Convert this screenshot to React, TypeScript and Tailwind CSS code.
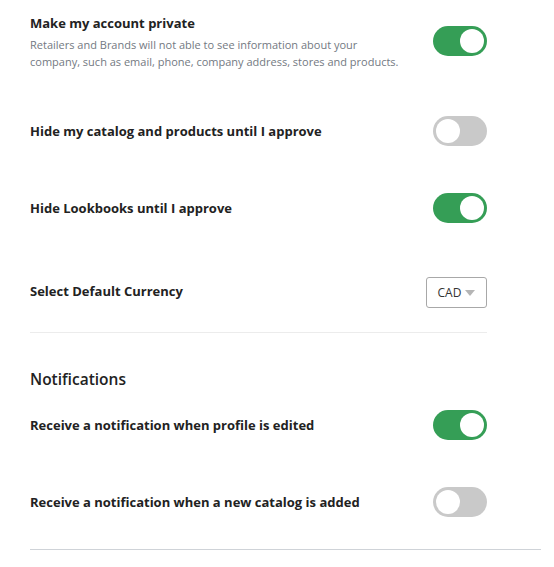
import { useState } from 'react';

function Toggle({ on, onChange }: { on: boolean; onChange: () => void }) {
  return (
    <button
      type="button"
      role="switch"
      aria-checked={on}
      onClick={onChange}
      className={
        'relative flex h-[30px] w-[54px] shrink-0 items-center rounded-full px-[3px] transition-colors ' +
        (on ? 'justify-end bg-[#359e56]' : 'justify-start bg-[#c9c9c9]')
      }
    >
      <span className="block h-[24px] w-[24px] rounded-full bg-white" />
    </button>
  );
}

const label = "text-[13px] font-bold leading-[20px] text-[#222]";

export default function App() {
  const [settings, setSettings] = useState({
    private: true,
    hideCatalog: false,
    hideLookbooks: true,
    profileEdited: true,
    newCatalog: false,
  });
  const flip = (k: keyof typeof settings) => setSettings((s) => ({ ...s, [k]: !s[k] }));

  return (
    <div className="min-h-[567px] bg-white pl-[30px] pt-[12px]" style={{ fontFamily: '"Open Sans", sans-serif' }}>
      <div className="w-[457px]">
        <div className="flex items-center justify-between">
          <div>
            <div className={label + ' pt-[1px]'}>Make my account private</div>
            <p className="mt-[3px] text-[11px] leading-[17px] text-[#737982]">
              Retailers and Brands will not able to see information about your
              <br />
              company, such as email, phone, company address, stores and products.
            </p>
          </div>
          <Toggle on={settings.private} onChange={() => flip('private')} />
        </div>

        <div className="mt-[46px] flex items-center justify-between">
          <div className={label}>Hide my catalog and products until I approve</div>
          <Toggle on={settings.hideCatalog} onChange={() => flip('hideCatalog')} />
        </div>

        <div className="mt-[47px] flex items-center justify-between">
          <div className={label}>Hide Lookbooks until I approve</div>
          <Toggle on={settings.hideLookbooks} onChange={() => flip('hideLookbooks')} />
        </div>

        <div className="mt-[54px] flex items-center justify-between">
          <div className={label + ' -mt-[4px]'}>Select Default Currency</div>
          <button
            type="button"
            className="flex h-[31px] w-[61px] items-center justify-center gap-[4px] rounded-[3px] border border-[#a8a8a8] bg-white text-[12px] text-[#333]"
          >
            CAD
            <svg width="10" height="6" viewBox="0 0 10 6">
              <path d="M0 0h10L5 6z" fill="#b5b5b5" />
            </svg>
          </button>
        </div>

        <div className="mt-[24px] h-px bg-[#ececec]" />

        <h2 className="mt-[36px] text-[15.5px] font-semibold leading-[20px] text-[#222]">Notifications</h2>

        <div className="mt-[21px] flex items-center justify-between">
          <div className={label}>Receive a notification when profile is edited</div>
          <Toggle on={settings.profileEdited} onChange={() => flip('profileEdited')} />
        </div>

        <div className="mt-[47px] flex items-center justify-between">
          <div className={label}>Receive a notification when a new catalog is added</div>
          <Toggle on={settings.newCatalog} onChange={() => flip('newCatalog')} />
        </div>
      </div>
      <div className="mt-[32px] h-px w-[511px] bg-[#cfd3d8]" />
    </div>
  );
}
